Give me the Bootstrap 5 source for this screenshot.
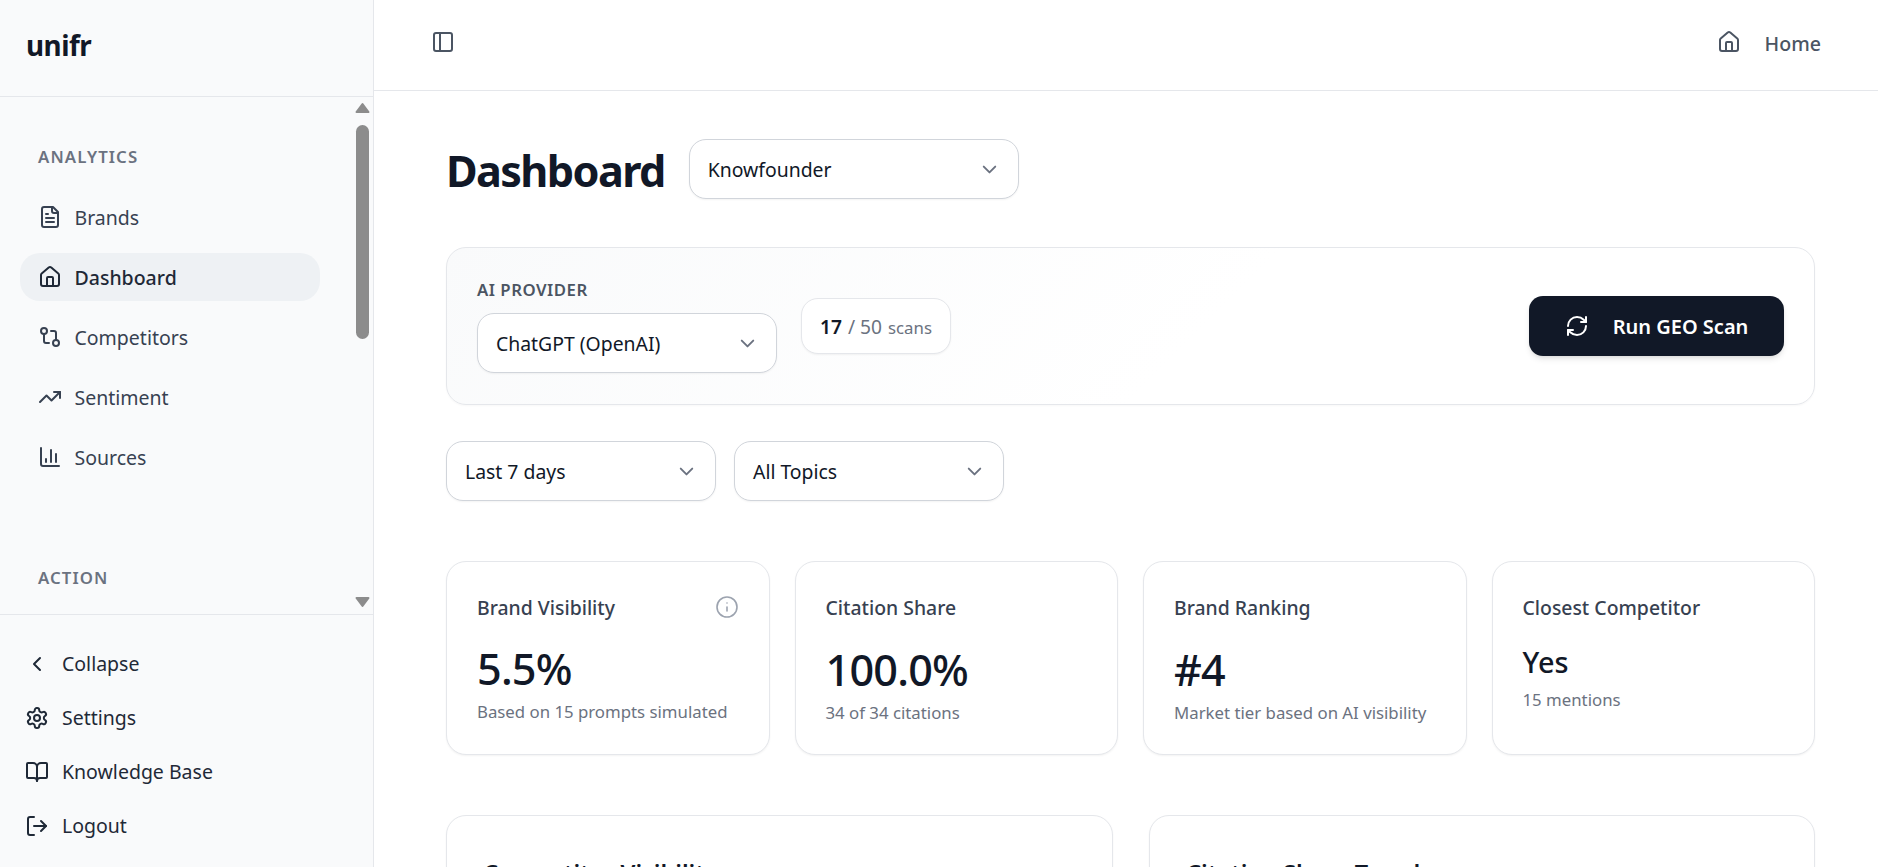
<!DOCTYPE html>
<html lang="en">
<head>
<meta charset="utf-8">
<title>Dashboard</title>
<link href="https://cdn.jsdelivr.net/npm/bootstrap@5.3.0/dist/css/bootstrap.min.css" rel="stylesheet">
<style>
html,body{height:867px;overflow:hidden;}
body{font-family:"Noto Sans","Open Sans",sans-serif;color:#111827;background:#fff;font-size:19.2px;}
.ic{fill:none;stroke:currentColor;stroke-width:2;stroke-linecap:round;stroke-linejoin:round;flex:none;}
.ic-nav{width:24px;height:24px;}
.side{width:374px;background:#f9fafb;border-right:1px solid #e5e7eb;flex:none;height:867px;}
.side-brand{height:97px;border-bottom:1px solid #e5e7eb;padding:0 0 5px 26px;font-size:27.8px;font-weight:700;letter-spacing:-.5px;color:#111827;}
.side-mid{height:517px;}
.side-scroll{flex:1;padding:0 0 0 20px;overflow:hidden;}
.sec-label{font-size:16.8px;font-weight:600;letter-spacing:1.1px;color:#6b7280;padding-left:18px;line-height:24px;}
.nav-entry{width:300px;height:48px;border-radius:20px;padding-left:18px;gap:12.5px;color:#374151;font-size:19.5px;text-decoration:none;}
.nav-entry span{padding-top:2px;}
.nav-entry.on{background:#eef1f4;font-weight:500;color:#1f2937;}
.fake-bar{width:15px;margin-right:3px;padding-top:5px;}
.tri{width:15px;height:12px;fill:#8c8c8c;stroke:#8c8c8c;stroke-width:2;stroke-linejoin:round;display:block;flex:none;}
.bar-thumb{width:13px;height:214px;border-radius:7px;background:#8c8c8c;margin:11px 0 0 1px;}
.tri-end{margin-top:auto;margin-bottom:6px;}
.side-foot{border-top:1px solid #e5e7eb;padding:22px 0 0 25px;}
.foot-entry{height:54px;gap:13px;color:#1f2937;font-size:19.5px;text-decoration:none;}
.topbar{height:91px;border-bottom:1px solid #e5e7eb;padding:0 57px 0 57px;}
.panel-ic{color:#4b5563;margin-bottom:7px;}
.home-link{gap:24px;color:#4b5563;font-weight:500;font-size:19.6px;text-decoration:none;margin-bottom:2px;}
.home-link svg{margin-bottom:3px;}
.page-area{padding:48px 63px 0 72px;}
.page-title{font-size:43.2px;font-weight:700;letter-spacing:-1.6px;color:#111827;line-height:56px;padding-top:4px;margin:0;}
.pick{height:60px;background:#fff;border:1px solid #d1d5db;border-radius:17px;padding:0 19px 0 18px;font-size:19.4px;color:#111827;box-shadow:0 1px 2px rgba(0,0,0,.05);}
.pick span{padding-top:2px;}
.pick-title{width:330px;}
.pick-provider{width:300px;}
.pick-filter{width:270px;}
.chev{width:23px;height:23px;color:#6b7280;margin-right:-2px;}
.gen-card{height:158px;margin-top:48px;border:1px solid #e5e7eb;border-radius:20px;background:linear-gradient(135deg,#f9fafb 0%,#fff 55%);padding:0 30px;box-shadow:0 1px 2px rgba(0,0,0,.03);}
.tiny-label{font-size:16.8px;font-weight:600;letter-spacing:.5px;color:#4b5563;line-height:24px;margin-bottom:11px;margin-top:-1px;}
.scan-pill{height:56px;padding:0 18px;margin-left:24px;background:#fff;border:1px solid #e5e7eb;border-radius:17px;box-shadow:0 1px 2px rgba(0,0,0,.05);white-space:nowrap;}
.scan-pill .num{font-weight:600;color:#111827;font-size:19.2px;}
.scan-pill .rest{color:#6b7280;font-size:19.2px;}
.scan-pill .word{color:#6b7280;font-size:16.8px;}
.scan-pill span{padding-top:3px;}
.run-btn{width:255px;height:60px;background:#111827;color:#fff;border:0;border-radius:14px;font-size:20px;font-weight:600;gap:24px;box-shadow:0 4px 6px -1px rgba(0,0,0,.1),0 2px 4px -2px rgba(0,0,0,.1);}
.run-btn span{padding-top:2px;}
.run-btn:hover{background:#111827;color:#fff;}
.filter-row{margin-top:36px;gap:18px;}
.metric-row{margin-top:60px;display:grid;grid-template-columns:repeat(4,1fr);gap:25px;}
.metric{height:194px;border:1px solid #e5e7eb;border-radius:20px;padding:31px 30px 0;box-shadow:0 1px 2px rgba(0,0,0,.05);background:#fff;}
.metric-name{font-size:19.4px;font-weight:500;color:#374151;line-height:29px;}
.metric-val{font-size:43.2px;font-weight:500;color:#111827;line-height:52px;margin-top:22px;letter-spacing:-.8px;}
.metric-val2{font-size:28.8px;font-weight:500;color:#111827;line-height:36px;margin-top:22px;}
.metric-sub{font-size:16.8px;color:#6b7280;line-height:24px;margin-top:5px;}
.metric-sub-low{margin-top:8px;}
.info-ic{width:24px;height:24px;color:#9ca3af;margin-top:2px;stroke-width:1.6;}
.chart-row{margin-top:60px;display:grid;grid-template-columns:667px 666px;justify-content:space-between;}
.chart-box{height:200px;border:1px solid #e5e7eb;border-radius:20px;padding:42px 36px;background:#fff;box-shadow:0 1px 2px rgba(0,0,0,.05);}
.chart-name{font-size:23.6px;font-weight:600;color:#111827;line-height:30px;margin:0;}
</style>
</head>
<body>
<div class="d-flex">
  <aside class="side d-flex flex-column">
    <div class="side-brand d-flex align-items-center">unifr</div>
    <div class="side-mid d-flex">
      <nav class="side-scroll">
        <div class="sec-label" style="margin-top:48px">ANALYTICS</div>
        <div class="d-flex flex-column" style="gap:12px;margin-top:24px">
          <a class="nav-entry d-flex align-items-center" href="#"><svg class="ic ic-nav" viewBox="0 0 24 24"><path d="M15 2H6a2 2 0 0 0-2 2v16a2 2 0 0 0 2 2h12a2 2 0 0 0 2-2V7Z"/><path d="M14 2v4a2 2 0 0 0 2 2h4"/><path d="M10 9H8"/><path d="M16 13H8"/><path d="M16 17H8"/></svg><span>Brands</span></a>
          <a class="nav-entry on d-flex align-items-center" href="#"><svg class="ic ic-nav" viewBox="0 0 24 24"><path d="M15 21v-8a1 1 0 0 0-1-1h-4a1 1 0 0 0-1 1v8"/><path d="M3 10a2 2 0 0 1 .709-1.528l7-5.999a2 2 0 0 1 2.582 0l7 5.999A2 2 0 0 1 21 10v9a2 2 0 0 1-2 2H5a2 2 0 0 1-2-2z"/></svg><span>Dashboard</span></a>
          <a class="nav-entry d-flex align-items-center" href="#"><svg class="ic ic-nav" viewBox="0 0 24 24"><circle cx="18" cy="18" r="3"/><circle cx="6" cy="6" r="3"/><path d="M13 6h3a2 2 0 0 1 2 2v7"/><path d="M11 18H8a2 2 0 0 1-2-2V9"/></svg><span>Competitors</span></a>
          <a class="nav-entry d-flex align-items-center" href="#"><svg class="ic ic-nav" viewBox="0 0 24 24"><path d="M16 7h6v6"/><path d="m22 7-8.5 8.5-5-5L2 17"/></svg><span>Sentiment</span></a>
          <a class="nav-entry d-flex align-items-center" href="#"><svg class="ic ic-nav" viewBox="0 0 24 24"><path d="M3 3v16a2 2 0 0 0 2 2h16"/><path d="M18 17V9"/><path d="M13 17V5"/><path d="M8 17v-3"/></svg><span>Sources</span></a>
        </div>
        <div class="sec-label" style="margin-top:85px">ACTION</div>
      </nav>
      <div class="fake-bar d-flex flex-column">
        <svg class="tri" viewBox="0 0 15 12"><path d="M7.5 2 13.5 10H1.5Z"/></svg>
        <div class="bar-thumb"></div>
        <svg class="tri tri-end" viewBox="0 0 15 12"><path d="M7.5 10 13.5 2H1.5Z"/></svg>
      </div>
    </div>
    <div class="side-foot">
      <a class="foot-entry d-flex align-items-center" href="#"><svg class="ic ic-nav" viewBox="0 0 24 24"><path d="m15 18-6-6 6-6"/></svg><span>Collapse</span></a>
      <a class="foot-entry d-flex align-items-center" href="#"><svg class="ic ic-nav" viewBox="0 0 24 24"><path d="M12.22 2h-.44a2 2 0 0 0-2 2v.18a2 2 0 0 1-1 1.73l-.43.25a2 2 0 0 1-2 0l-.15-.08a2 2 0 0 0-2.73.73l-.22.38a2 2 0 0 0 .73 2.73l.15.1a2 2 0 0 1 1 1.72v.51a2 2 0 0 1-1 1.74l-.15.09a2 2 0 0 0-.73 2.73l.22.38a2 2 0 0 0 2.73.73l.15-.08a2 2 0 0 1 2 0l.43.25a2 2 0 0 1 1 1.73V20a2 2 0 0 0 2 2h.44a2 2 0 0 0 2-2v-.18a2 2 0 0 1 1-1.73l.43-.25a2 2 0 0 1 2 0l.15.08a2 2 0 0 0 2.73-.73l.22-.39a2 2 0 0 0-.73-2.73l-.15-.08a2 2 0 0 1-1-1.74v-.5a2 2 0 0 1 1-1.74l.15-.09a2 2 0 0 0 .73-2.73l-.22-.38a2 2 0 0 0-2.73-.73l-.15.08a2 2 0 0 1-2 0l-.43-.25a2 2 0 0 1-1-1.73V4a2 2 0 0 0-2-2z"/><circle cx="12" cy="12" r="3"/></svg><span>Settings</span></a>
      <a class="foot-entry d-flex align-items-center" href="#"><svg class="ic ic-nav" viewBox="0 0 24 24"><path d="M12 7v14"/><path d="M3 18a1 1 0 0 1-1-1V4a1 1 0 0 1 1-1h5a4 4 0 0 1 4 4 4 4 0 0 1 4-4h5a1 1 0 0 1 1 1v13a1 1 0 0 1-1 1h-6a3 3 0 0 0-3 3 3 3 0 0 0-3-3z"/></svg><span>Knowledge Base</span></a>
      <a class="foot-entry d-flex align-items-center" href="#"><svg class="ic ic-nav" viewBox="0 0 24 24"><path d="m16 17 5-5-5-5"/><path d="M21 12H9"/><path d="M9 21H5a2 2 0 0 1-2-2V5a2 2 0 0 1 2-2h4"/></svg><span>Logout</span></a>
    </div>
  </aside>
  <main class="flex-grow-1" style="min-width:0">
    <header class="topbar d-flex align-items-center justify-content-between">
      <svg class="ic ic-nav panel-ic" viewBox="0 0 24 24"><rect x="3" y="3" width="18" height="18" rx="2"/><path d="M9 3v18"/></svg>
      <a class="home-link d-flex align-items-center" href="#"><svg class="ic ic-nav" viewBox="0 0 24 24"><path d="M15 21v-8a1 1 0 0 0-1-1h-4a1 1 0 0 0-1 1v8"/><path d="M3 10a2 2 0 0 1 .709-1.528l7-5.999a2 2 0 0 1 2.582 0l7 5.999A2 2 0 0 1 21 10v9a2 2 0 0 1-2 2H5a2 2 0 0 1-2-2z"/></svg><span>Home</span></a>
    </header>
    <div class="page-area">
      <div class="d-flex align-items-center" style="gap:24px">
        <h1 class="page-title">Dashboard</h1>
        <div class="pick pick-title d-flex align-items-center justify-content-between"><span>Knowfounder</span><svg class="ic chev" viewBox="0 0 24 24"><path d="m6 9 6 6 6-6"/></svg></div>
      </div>
      <section class="gen-card d-flex align-items-center justify-content-between">
        <div class="d-flex align-items-center">
          <div>
            <div class="tiny-label">AI PROVIDER</div>
            <div class="pick pick-provider d-flex align-items-center justify-content-between"><span>ChatGPT (OpenAI)</span><svg class="ic chev" viewBox="0 0 24 24"><path d="m6 9 6 6 6-6"/></svg></div>
          </div>
          <div class="scan-pill d-flex align-items-center" style="gap:6px"><span class="num">17</span><span class="rest">/ 50</span><span class="word">scans</span></div>
        </div>
        <button class="btn run-btn d-flex align-items-center justify-content-center" type="button"><svg class="ic ic-nav" viewBox="0 0 24 24"><path d="M3 12a9 9 0 0 1 9-9 9.75 9.75 0 0 1 6.74 2.74L21 8"/><path d="M21 3v5h-5"/><path d="M21 12a9 9 0 0 1-9 9 9.75 9.75 0 0 1-6.74-2.74L3 16"/><path d="M8 16H3v5"/></svg><span>Run GEO Scan</span></button>
      </section>
      <div class="filter-row d-flex">
        <div class="pick pick-filter d-flex align-items-center justify-content-between"><span>Last 7 days</span><svg class="ic chev" viewBox="0 0 24 24"><path d="m6 9 6 6 6-6"/></svg></div>
        <div class="pick pick-filter d-flex align-items-center justify-content-between"><span>All Topics</span><svg class="ic chev" viewBox="0 0 24 24"><path d="m6 9 6 6 6-6"/></svg></div>
      </div>
      <div class="metric-row">
        <div class="metric">
          <div class="d-flex justify-content-between align-items-start"><span class="metric-name">Brand Visibility</span><svg class="ic info-ic" viewBox="0 0 24 24"><circle cx="12" cy="12" r="10"/><path d="M12 16v-4"/><path d="M12 8h.01"/></svg></div>
          <div class="metric-val" style="margin-top:21px">5.5%</div>
          <div class="metric-sub">Based on 15 prompts simulated</div>
        </div>
        <div class="metric">
          <div class="metric-name">Citation Share</div>
          <div class="metric-val">100.0%</div>
          <div class="metric-sub">34 of 34 citations</div>
        </div>
        <div class="metric">
          <div class="metric-name">Brand Ranking</div>
          <div class="metric-val">#4</div>
          <div class="metric-sub">Market tier based on AI visibility</div>
        </div>
        <div class="metric">
          <div class="metric-name">Closest Competitor</div>
          <div class="metric-val2">Yes</div>
          <div class="metric-sub metric-sub-low">15 mentions</div>
        </div>
      </div>
      <div class="chart-row">
        <div class="chart-box"><h2 class="chart-name">Competitor Visibility</h2></div>
        <div class="chart-box"><h2 class="chart-name">Citation Share Trend</h2></div>
      </div>
    </div>
  </main>
</div>
<script src="https://cdn.jsdelivr.net/npm/bootstrap@5.3.0/dist/js/bootstrap.bundle.min.js"></script>
</body>
</html>
